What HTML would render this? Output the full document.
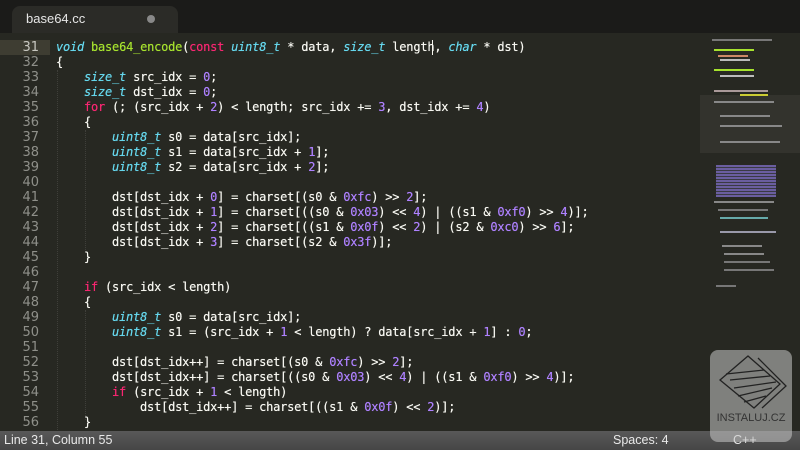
<!DOCTYPE html>
<html><head><meta charset="utf-8"><style>
*{margin:0;padding:0;box-sizing:border-box}
body{width:800px;height:450px;overflow:hidden;background:#272822;position:relative;font-family:"DejaVu Sans Mono",monospace}
#tabbar{position:absolute;left:0;top:0;width:800px;height:33px;background:#1b1b19}
#tab{position:absolute;left:12px;top:6px;width:166px;height:27px;background:#2b2b27;border-radius:8px 8px 0 0}
#tab span{position:absolute;left:14px;top:5px;color:#e6e6e6;font:13px "Liberation Sans",sans-serif}
#tab i{position:absolute;left:135px;top:9px;width:8px;height:8px;border-radius:50%;background:#888}
#gut{position:absolute;left:0;top:40px;width:50px}
.ln{height:15px;line-height:15px;color:#8f908a;font-size:13px;font-family:"DejaVu Sans",sans-serif;text-align:right;padding-right:11px}
.ln.cur{background:#3e3d32;color:#c8c8c0}
#code{position:absolute;left:56px;top:40px;font-size:12px;letter-spacing:-0.22px;color:#f8f8f2;text-shadow:0 0 0.4px currentColor}
#code div{height:15px;line-height:15px;white-space:pre}
.t{color:#66d9ef;font-style:italic}.k{color:#f92672}.n{color:#ae81ff}.f{color:#a6e22e}
.guide{position:absolute;width:0;border-left:1px dotted #3f3f3a}
#mini{position:absolute;left:700px;top:33px;width:100px;height:398px}
.mb{position:absolute;height:2px}
#status{position:absolute;left:0;top:431px;width:800px;height:19px;background:linear-gradient(#595959,#464646);color:#e8e8e8;font:12.5px "Liberation Sans",sans-serif;line-height:19px}
#wm{position:absolute;left:710px;top:350px;width:82px;height:92px;background:rgba(200,200,200,.55);border-radius:8px}
#wm span{position:absolute;left:0;width:82px;top:62px;text-align:center;font:11px "Liberation Sans",sans-serif;color:#333}
</style></head><body>
<div id="tabbar"><div id="tab"><span>base64.cc</span><i></i></div></div>
<div id="gut"><div class="ln cur">31</div><div class="ln">32</div><div class="ln">33</div><div class="ln">34</div><div class="ln">35</div><div class="ln">36</div><div class="ln">37</div><div class="ln">38</div><div class="ln">39</div><div class="ln">40</div><div class="ln">41</div><div class="ln">42</div><div class="ln">43</div><div class="ln">44</div><div class="ln">45</div><div class="ln">46</div><div class="ln">47</div><div class="ln">48</div><div class="ln">49</div><div class="ln">50</div><div class="ln">51</div><div class="ln">52</div><div class="ln">53</div><div class="ln">54</div><div class="ln">55</div><div class="ln">56</div></div>
<div class="guide" style="left:57px;top:70px;height:360px"></div>
<div class="guide" style="left:85px;top:130px;height:120px"></div>
<div class="guide" style="left:85px;top:310px;height:110px"></div>
<div id="code"><div><span class="t">void</span> <span class="f">base64_encode</span>(<span class="k">const</span> <span class="t">uint8_t</span> * data, <span class="t">size_t</span> length, <span class="t">char</span> * dst)</div><div>{</div><div>    <span class="t">size_t</span> src_idx = <span class="n">0</span>;</div><div>    <span class="t">size_t</span> dst_idx = <span class="n">0</span>;</div><div>    <span class="k">for</span> (; (src_idx + <span class="n">2</span>) &lt; length; src_idx += <span class="n">3</span>, dst_idx += <span class="n">4</span>)</div><div>    {</div><div>        <span class="t">uint8_t</span> s0 = data[src_idx];</div><div>        <span class="t">uint8_t</span> s1 = data[src_idx + <span class="n">1</span>];</div><div>        <span class="t">uint8_t</span> s2 = data[src_idx + <span class="n">2</span>];</div><div> </div><div>        dst[dst_idx + <span class="n">0</span>] = charset[(s0 &amp; <span class="n">0xfc</span>) &gt;&gt; <span class="n">2</span>];</div><div>        dst[dst_idx + <span class="n">1</span>] = charset[((s0 &amp; <span class="n">0x03</span>) &lt;&lt; <span class="n">4</span>) | ((s1 &amp; <span class="n">0xf0</span>) &gt;&gt; <span class="n">4</span>)];</div><div>        dst[dst_idx + <span class="n">2</span>] = charset[((s1 &amp; <span class="n">0x0f</span>) &lt;&lt; <span class="n">2</span>) | (s2 &amp; <span class="n">0xc0</span>) &gt;&gt; <span class="n">6</span>];</div><div>        dst[dst_idx + <span class="n">3</span>] = charset[(s2 &amp; <span class="n">0x3f</span>)];</div><div>    }</div><div> </div><div>    <span class="k">if</span> (src_idx &lt; length)</div><div>    {</div><div>        <span class="t">uint8_t</span> s0 = data[src_idx];</div><div>        <span class="t">uint8_t</span> s1 = (src_idx + <span class="n">1</span> &lt; length) ? data[src_idx + <span class="n">1</span>] : <span class="n">0</span>;</div><div> </div><div>        dst[dst_idx++] = charset[(s0 &amp; <span class="n">0xfc</span>) &gt;&gt; <span class="n">2</span>];</div><div>        dst[dst_idx++] = charset[((s0 &amp; <span class="n">0x03</span>) &lt;&lt; <span class="n">4</span>) | ((s1 &amp; <span class="n">0xf0</span>) &gt;&gt; <span class="n">4</span>)];</div><div>        <span class="k">if</span> (src_idx + <span class="n">1</span> &lt; length)</div><div>            dst[dst_idx++] = charset[((s1 &amp; <span class="n">0x0f</span>) &lt;&lt; <span class="n">2</span>)];</div><div>    }</div></div>
<div style="position:absolute;left:432px;top:40px;width:1px;height:15px;background:#f8f8f0"></div>
<div id="mini">
<div style="position:absolute;left:0;top:62px;width:100px;height:58px;background:#33332d"></div>
<div class="mb" style="left:12px;top:6px;width:60px;background:#777"></div>
<div class="mb" style="left:14px;top:16px;width:40px;background:#a6e22e"></div>
<div class="mb" style="left:18px;top:22px;width:30px;background:#c86"></div>
<div class="mb" style="left:20px;top:26px;width:30px;background:#bbb"></div>
<div class="mb" style="left:14px;top:36px;width:40px;background:#a6e22e"></div>
<div class="mb" style="left:20px;top:42px;width:34px;background:#bbb"></div>
<div class="mb" style="left:14px;top:57px;width:54px;background:#a99"></div>
<div class="mb" style="left:40px;top:61px;width:28px;background:#cc3"></div>
<div class="mb" style="left:14px;top:68px;width:60px;background:#888"></div>
<div class="mb" style="left:20px;top:82px;width:50px;background:#888"></div>
<div class="mb" style="left:20px;top:92px;width:62px;background:#888"></div>
<div class="mb" style="left:20px;top:108px;width:60px;background:#888"></div>
<div style="position:absolute;left:16px;top:132px;width:60px;height:32px;background:repeating-linear-gradient(#6a5ea0 0 2px,#3a3a44 2px 3px)"></div>
<div class="mb" style="left:14px;top:168px;width:60px;background:#888"></div>
<div class="mb" style="left:18px;top:176px;width:50px;background:#777"></div>
<div class="mb" style="left:20px;top:184px;width:48px;background:#6aa"></div>
<div class="mb" style="left:20px;top:198px;width:56px;background:#99a"></div>
<div class="mb" style="left:22px;top:212px;width:40px;background:#888"></div>
<div class="mb" style="left:24px;top:220px;width:40px;background:#888"></div>
<div class="mb" style="left:24px;top:228px;width:46px;background:#777"></div>
<div class="mb" style="left:24px;top:236px;width:50px;background:#777"></div>
<div class="mb" style="left:16px;top:252px;width:20px;background:#777"></div>
</div>
<div id="status"><span style="position:absolute;left:4px">Line 31, Column 55</span><span style="position:absolute;left:613px">Spaces: 4</span><span style="position:absolute;left:733px">C++</span></div>
<div id="wm"><svg width="82" height="62" viewBox="0 0 82 62"><g fill="none" stroke="#222" stroke-width="1.3"><path d="M10 30 L38 6 L70 34 L44 58 Z"/><path d="M16 24 L54 20 M20 30 L60 26 M24 38 L66 32 M28 46 L62 38 M34 52 L56 46"/><path d="M48 8 L76 36 L52 58"/></g></svg><span>INSTALUJ.CZ</span></div>
</body></html>
